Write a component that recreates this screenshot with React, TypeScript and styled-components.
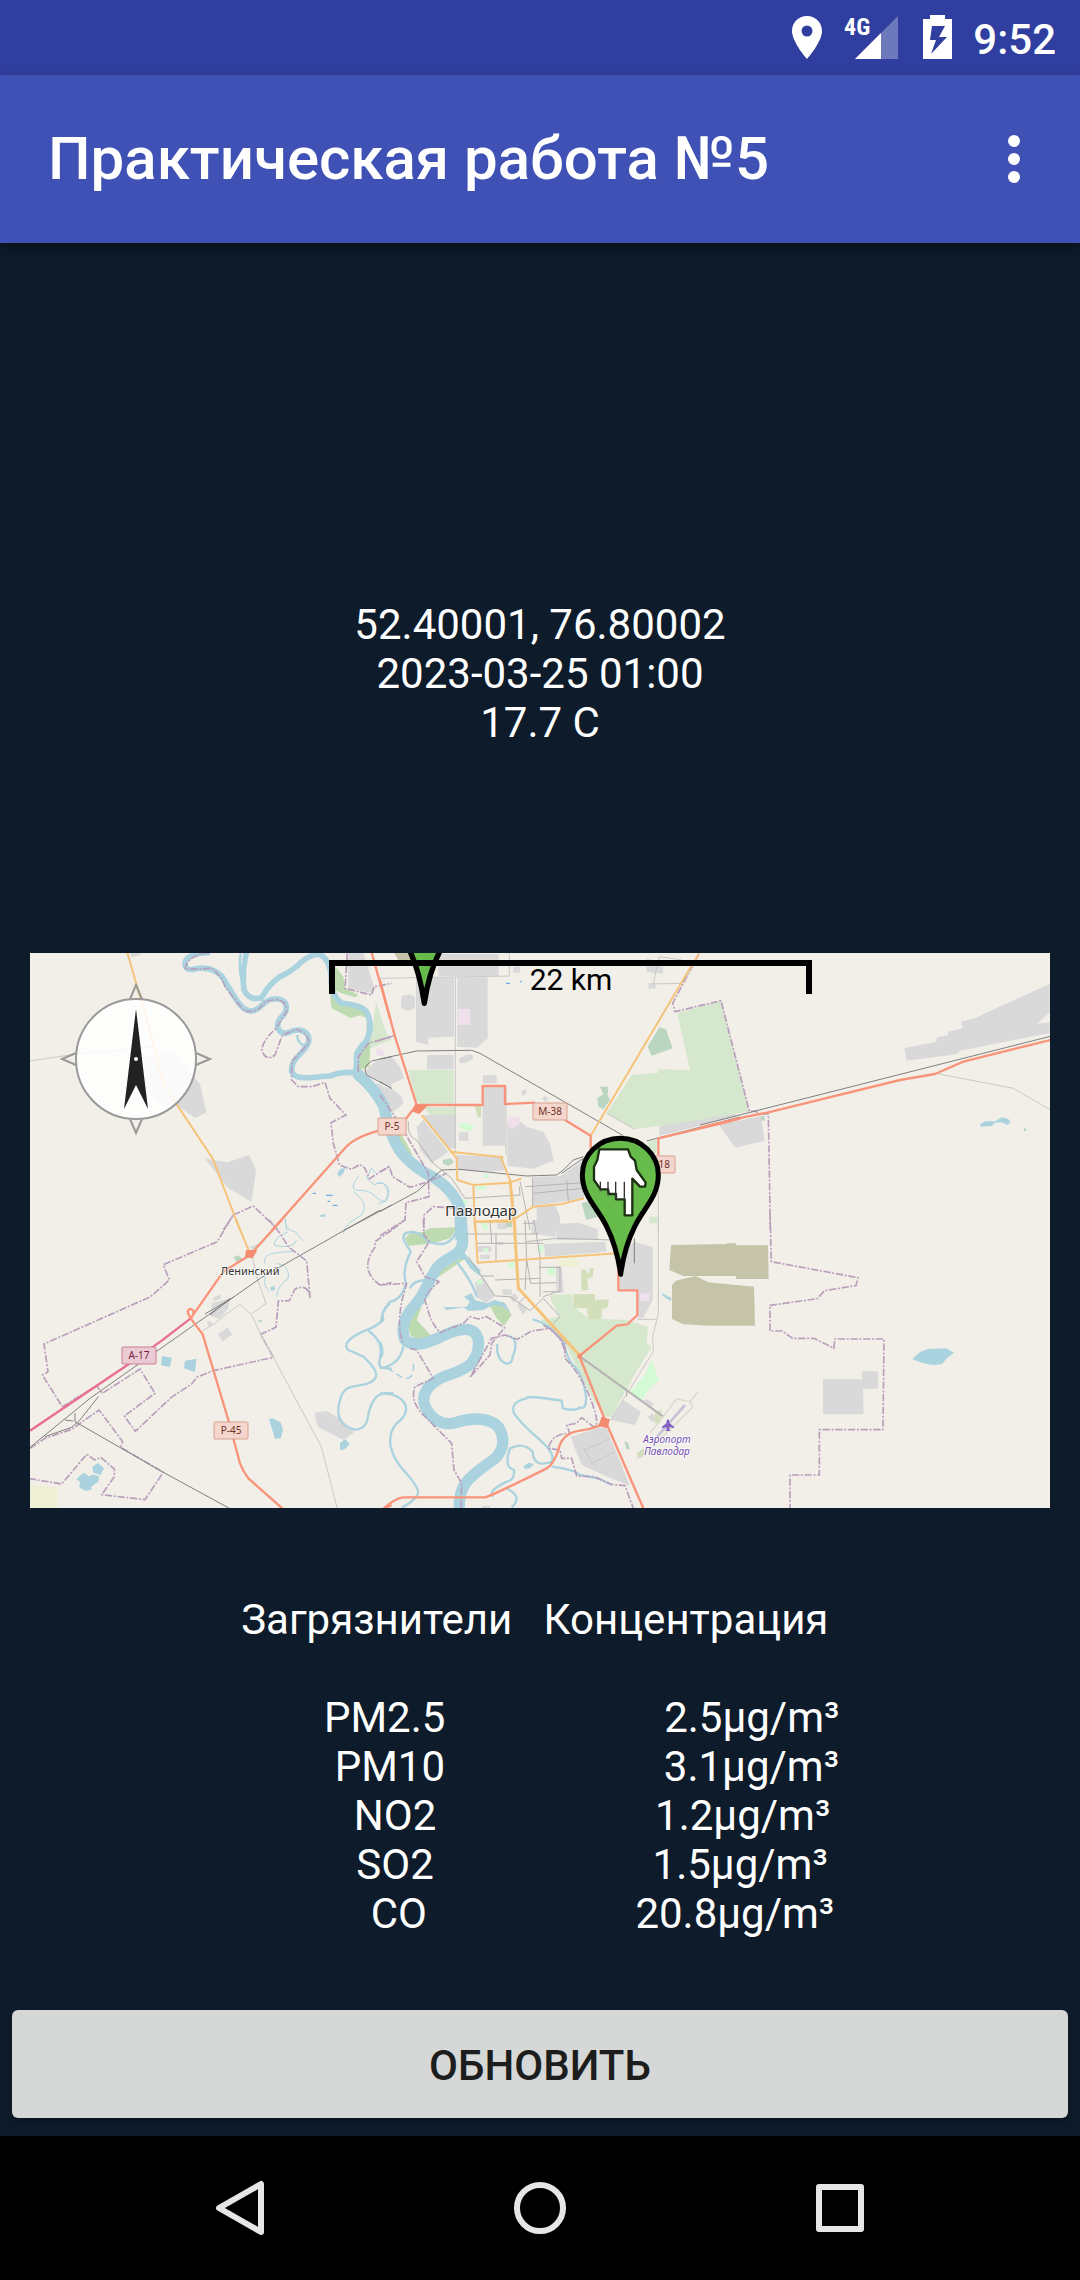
import React from "react";
import styled, { createGlobalStyle } from "styled-components";

const GlobalStyle = createGlobalStyle`
  * { box-sizing: border-box; }
  body { margin: 0; background: #0d1b2a; font-family: Roboto, "Noto Sans", sans-serif; }
  button { font: inherit; border: 0; padding: 0; background: none; cursor: pointer; }
`;

const Screen = styled.div`
  display: flex;
  flex-direction: column;
  min-height: 100vh;
  color: #fff;
  font-size: 42px;
  line-height: 49px;
`;

const StatusBar = styled.div`
  display: flex;
  align-items: flex-start;
  justify-content: flex-end;
  height: 75px;
  padding: 15px 24px 0 0;
  background: #303f9f;
`;

const StatusIcons = styled.svg`
  width: 162px;
  height: 45px;
  margin-right: 21px;
  font-family: "Roboto Condensed", "Liberation Sans Narrow", Roboto, sans-serif;
  font-size: 24px;
  font-weight: 700;
`;

const Clock = styled.time`
  font-weight: 500;
`;

const AppBar = styled.header`
  position: relative;
  display: flex;
  align-items: center;
  justify-content: space-between;
  height: 168px;
  padding: 0 30px 0 48px;
  background: #3f51b5;
  box-shadow: 0 4px 12px rgba(0, 0, 0, 0.4);
`;

const Title = styled.h1`
  margin: 0;
  font-size: 60px;
  line-height: 70px;
  font-weight: 500;
`;

const MenuButton = styled.button`
  display: grid;
  place-items: center;
  width: 72px;
  height: 96px;
`;

const Content = styled.main`
  flex: 1;
  display: flex;
  flex-direction: column;
`;

const Summary = styled.section`
  flex: 1;
  display: flex;
  flex-direction: column;
  justify-content: flex-end;
  padding-bottom: 206px;
  text-align: center;
`;

const Line = styled.p`
  margin: 0;
`;

const MapFrame = styled.section`
  margin: 0 30px;
`;

const MapCanvas = styled.svg`
  display: block;
  width: 100%;
  background: #f2efe9;
`;

const Report = styled.table`
  display: block;
  margin: 87px 0 72px;

  thead {
    display: block;
    padding-bottom: 49px;
  }
  tbody {
    display: block;
  }
`;

const ReportRow = styled.tr`
  display: flex;
  justify-content: center;
  white-space: pre;
`;

const HeadCell = styled.th`
  padding: 0;
  font-weight: 400;
`;

const Cell = styled.td`
  padding: 0;
`;

const RefreshButton = styled.button`
  height: 108px;
  margin: 0 12px 18px;
  padding-top: 2px;
  border-radius: 6px;
  background: #d6d7d7;
  color: #1d1d1d;
  font-weight: 500;
  text-transform: uppercase;
  box-shadow: 0 5px 6px rgba(0, 0, 0, 0.22);
`;

const NavBar = styled.nav`
  display: grid;
  grid-template-columns: repeat(3, 1fr);
  height: 144px;
  padding: 0 90px;
  background: #000;
`;

const NavButton = styled.button`
  display: grid;
  place-items: center;
`;

/* ---------- map data ---------- */

type Sheet = "A" | "B" | "C" | "D" | "E" | "F";
type Shape = [Sheet, string];

const ORIGIN: Record<Sheet, string> = {
  A: "0 0",
  B: "1050 0",
  C: "2010 0",
  D: "0 840",
  E: "1050 840",
  F: "2010 840",
};

interface Layer {
  fill?: string;
  stroke?: string;
  width?: number;
  dash?: string;
  shapes: Shape[];
}

const LAYERS: Layer[] = [
  {
    fill: "#d9d9d9",
    shapes: [
      ["A", "M300 38H335L330 46 305 52ZM345 350L430 335 470 385 510 432 529 518 495 534 440 495 385 488 345 440Z"],
      ["A", "M524 655L592 667 658 645 678 690 665 786 595 745Z"],
      ["A", "M955 39H1000L1035 150 1020 158 955 145Z"],
      ["A", "M1005 395L1035 365 1085 350V440L1020 410ZM1020 435L1050 430 1085 470V510L1050 490Z"],
      ["B", "M175 42H356V108H175ZM400 80H420V98H400ZM108 115L222 112V290L145 293V315L108 305ZM232 112H323V295L292 323 232 320ZM65 168L90 163 105 172V205L85 212 63 205Z"],
      ["B", "M141 345H221V388H141ZM237 355L260 344 280 345 278 358 255 370 238 368ZM0 365L40 355 65 390 72 415 40 430 0 420ZM0 440L35 445 65 470 70 490 40 515 0 490Z"],
      ["B", "M309 405H350V430H309ZM308 440H375V617H308ZM382 545L415 540 440 560 490 575 510 612 521 662 460 686 382 678ZM423 455L440 445 438 462 428 468ZM485 475L495 468 505 476 497 487Z"],
      ["B", "M125 525H228V625H205L170 580ZM110 560L130 540 205 635 155 670 120 630ZM228 645L365 650 380 690 330 695 232 690ZM237 577H265V602H237Z"],
      ["B", "M458 712L540 708 612 660V775L458 798ZM470 798L525 795 540 830V870H470ZM800 55L830 65 850 85 848 102 800 95ZM805 130L825 128 828 145 806 148Z"],
      ["B", "M838 558L960 533 1040 514 1065 530 838 588ZM1015 550L1060 545V615Z"],
      ["C", "M58 555L182 528 195 602 105 623ZM0 530L100 514 110 530 0 555Z"],
      ["C", "M613 324L710 305V292L745 285V275L788 264 783 245 825 234 1055 129V212L1010 252 1055 245V278L780 332 770 343 620 362Z"],
      ["D", "M550 233L570 223 573 236 552 243ZM545 250L600 235 595 265 570 295 543 290ZM562 343L594 322 606 344 578 364ZM530 308L540 303 548 314 538 320Z"],
      ["D", "M853 578L890 573 935 600 973 636 940 660 863 620Z"],
      ["D", "M658 80L685 72 675 95Z"],
      ["E", "M455 0H510L528 18V50L455 42ZM530 12L595 8 653 28V60H530ZM492 72L675 65 680 95 495 110ZM528 138H545L552 218H530Z"],
      ["E", "M286 185L310 170 344 228 318 250 290 232ZM367 208H395V225H368ZM390 230L405 220 415 235 400 248ZM410 255L425 248 440 270 430 284ZM522 310L540 292 573 335 562 347Z"],
      ["E", "M712 100L765 65 818 82V240L790 293H772V210H715ZM730 540L783 575 765 615 690 600ZM573 650L660 622 680 625 750 798 670 765 605 735 583 680ZM305 858H330V870H310ZM790 542L800 538 823 552 815 560ZM803 590L818 580 830 600 815 607Z"],
      ["E", "M290 78H335V95H290ZM300 105H330V118H302ZM352 10H380V28H352ZM350 65H370V75H350Z"],
      ["F", "M369 478H486V454H534V506H489L491 583H369Z"],
    ],
  },
  {
    fill: "#d5e8cd",
    shapes: [
      ["A", "M1038 185L1072 290 1085 300 1020 325Z"],
      ["B", "M85 390H221V490L125 492 108 480ZM130 502H225V525H150ZM-5 220L20 285-5 290Z"],
      ["B", "M892 220L1023 182 1107 515 1060 522 905 548 765 568 680 520 755 405 835 398V388L930 390ZM806 605L830 600V640H806ZM808 830H832V850H808Z"],
      ["E", "M510 225L575 222 580 260 625 295 740 300 803 320 800 370 815 380 760 470 695 590H672L640 540 555 370 480 300 540 290 515 245Z"],
      ["D", "M610 115L635 112 625 128Z"],
    ],
  },
  {
    fill: "#bddab1",
    shapes: [
      ["A", "M915 78L940 110 945 145 985 165 975 172 935 160 905 145ZM900 165L940 192 1000 205 1020 240 1022 300 1018 380 985 390 985 340 1008 300 1010 235 990 226 962 234 905 205Z"],
      ["B", "M25 590L60 575 98 645 75 655 48 635Z"],
      ["E", "M75 55L90 40 130 35 150 25 235 22 210 55 160 70 85 78ZM180 155L250 95 262 110 235 130 170 175ZM80 290L125 260 110 300 158 352 115 362 90 345ZM325 250L370 245 395 285 372 318 350 295ZM150 580L175 585 190 600 165 600Z"],
    ],
  },
  {
    fill: "#bad6c0",
    shapes: [
      ["B", "M803 320L838 262 858 268 878 325 815 347ZM652 475L670 462 660 440 685 440 683 465 690 480 670 508 655 500ZM188 660L212 655 222 667 205 678 190 672ZM605 790L640 780 655 830 618 840ZM380 845H395V862H380Z"],
      ["C", "M183 528H194V542H183ZM972 563L980 568 978 574 972 573Z"],
      ["D", "M610 112L625 106 637 117 622 129ZM683 300L697 300 692 308Z"],
      ["E", "M378 0H396V20H378ZM733 665H742L750 688H740Z"],
    ],
  },
  {
    fill: "#d3debb",
    shapes: [
      ["E", "M580 222H645V240L687 238 683 262 665 268V297H625L620 265H580ZM603 148L618 150 625 165 630 145 642 145 638 170 622 178 625 210 605 212Z"],
      ["B", "M285 498H303V532H293Z"],
      ["E", "M825 575L845 570 840 610 823 608ZM770 700L790 685 800 705 775 715Z"],
    ],
  },
  {
    fill: "#d2fad4",
    shapes: [
      ["E", "M815 418L836 480 800 515 785 545 750 515 795 465ZM503 143H525V165H503ZM475 75H490V98H475ZM385 127H403V142H385ZM305 2H318V22H305ZM310 85H325V97H310ZM290 183L305 178 310 190 292 195Z"],
      ["B", "M238 550Q262 545 285 560Q280 572 260 573Q238 568 238 550ZM248 775L262 780 258 795 248 790ZM285 738H320V748H285ZM310 850H322V870H310ZM310 705L325 702V713L312 716Z"],
    ],
  },
  {
    fill: "#efe0ec",
    shapes: [
      ["B", "M234 207H270V255H234ZM382 530H420V550L395 567 382 550ZM0 325L15 335 10 350-12 345-12 330Z"],
      ["E", "M780 220H808V243H780Z"],
    ],
  },
  {
    fill: "#eef0d5",
    shapes: [
      ["D", "M0 792L83 805V866H0Z"],
      ["E", "M530 120L590 112 595 140 540 140Z"],
    ],
  },
  {
    fill: "#c5c3a8",
    shapes: [
      ["B", "M43 39H90L100 60H55Z"],
      ["E", "M873 75L1040 72V70H1068V76H1164L1166 177H1068V168H910L868 150ZM888 182L947 168 985 187 1122 200 1125 317H990L910 313 876 297V195Z"],
    ],
  },
  {
    fill: "#aad3df",
    shapes: [
      ["A", "M922 700L930 688 946 683 940 700 926 712ZM868 826L888 822 885 830 870 830Z"],
      ["C", "M840 553L855 544 885 544 905 532 925 537 932 548 922 555 905 547 885 548 875 558 842 560Z"],
      ["D", "M397 408L425 413 420 441 393 436ZM465 422L499 416 495 456 462 445ZM717 598L728 595 752 607 759 630 752 655 735 657ZM930 670L945 657 959 672 945 688 930 690ZM720 203L732 197 736 208 725 214ZM187 740L205 729 222 745 212 765 190 758ZM139 778L160 758 180 770 185 763 207 768 205 785 183 800 185 810 165 812 148 802 150 785Z"],
      ["E", "M252 230L275 220 285 240 320 250 345 240 375 250 390 275 365 258 340 255 310 270 265 273 250 262 200 270 190 262 260 260 270 245ZM430 740L445 728 462 732 450 745 435 746ZM846 220L875 235 872 243 848 228ZM225 115L250 95 270 120 302 150 300 168 270 145 255 120Z"],
      ["F", "M637 418L660 396 685 387 738 385 762 398 741 415 725 433 700 435 670 430Z"],
    ],
  },
  {
    stroke: "#aad3df",
    width: 17,
    shapes: [
      ["A", "M540 37Q465 42 465 70Q465 92 490 88Q540 75 575 108C610 160 630 215 665 213C695 210 700 178 730 177C775 172 780 210 750 235C735 260 745 285 775 278C810 260 840 275 836 305C825 340 780 355 785 395C800 425 850 410 900 408Q945 390 985 402"],
      ["A", "M650 37Q635 90 642 150Q660 185 695 172Q720 130 750 110Q790 92 815 65Q850 38 872 45Q900 60 904 110Q900 165 935 190Q1000 195 1012 220Q1030 260 1010 300Q975 340 978 395"],
    ],
  },
  {
    stroke: "#aad3df",
    width: 34,
    shapes: [
      ["A", "M978 398Q1035 445 1062 500Q1080 590 1115 640Q1160 690 1210 712Q1270 750 1290 805L1293 900"],
      ["E", "M243-20L248 60C250 110 195 110 170 145C140 190 140 215 105 255C60 300 65 350 80 365C120 385 160 360 210 338C260 320 290 325 296 365C295 430 260 445 220 460C170 475 125 500 132 550C150 600 190 620 230 607C280 590 330 595 355 620C380 660 370 705 325 730C260 775 235 800 238 870"],
    ],
  },
  {
    stroke: "#aad3df",
    width: 7,
    shapes: [
      ["A", "M632 40Q625 80 635 125M665 175L700 180M802 285Q800 310 830 320M985 385Q955 340 1008 300"],
      ["D", "M1080 250Q1050 275 1060 300Q1030 325 1005 332Q930 365 955 390Q990 405 1000 410C1055 460 1045 480 1010 492C960 500 940 500 930 540C910 605 950 625 980 629C1030 620 1000 570 1040 530Q1060 515 1090 520M1015 332C1085 380 1030 430 1055 443L1085 447"],
      ["E", "M235 20C215 85 175 75 145 65C125 45 110 30 80 38C55 50 85 80 92 95Q65 150 78 190Q65 240 30 245Q0 280 5 305M90 205Q100 180 145 180M0 365Q15 400 0 415M70 380Q60 435 0 445M0 520C75 520 105 570 50 610C15 650 30 705 70 750Q125 810 112 825Q95 850 65 862M230 125Q280 190 290 230"],
      ["E", "M352 372C345 430 395 450 398 410C415 370 405 350 380 347M458 298Q510 310 550 365Q560 410 575 430Q610 460 618 530Q620 570 600 562Q585 575 548 565L545 542Q440 525 440 535Q390 545 402 580C450 650 530 680 516 725Q460 745 458 695Q430 665 390 685Q370 740 402 750Q405 780 380 785C330 810 330 820 340 830M515 740L550 745 585 755 600 765 655 775 695 795M380 805Q430 830 395 862"],
    ],
  },
  {
    stroke: "#aad3df",
    width: 3,
    shapes: [
      ["A", "M985 710Q960 740 975 750Q1010 750 1025 760Q1070 805 1075 765Q1065 710 1035 735L1010 715 1025 685 1038 700M970 755Q1020 790 995 825Q945 850 940 880M765 835L770 870"],
      ["D", "M765 0Q765 30 795 35L818 62M775 35Q735 50 732 75Q790 90 800 60M790 95Q690 95 705 130M740 130Q780 135 775 175Q740 200 740 230M705 170Q700 200 718 215"],
      ["B", "M-12 730Q45 725 15 785L-5 790"],
    ],
  },
  {
    stroke: "#aad3df",
    width: 5,
    dash: "22 12",
    shapes: [["E", "M20 442L70 475Q105 480 100 430"]],
  },
  {
    stroke: "#b99fbc",
    width: 5,
    dash: "22 5 6 5",
    shapes: [
      ["A", "M540 37Q470 45 465 88L545 85Q575 108 585 140L640 210Q680 225 705 185Q770 165 770 215L738 265Q690 310 697 335Q710 365 735 345L757 285L800 268Q840 285 836 310L785 365V420L805 440H845L885 427L900 475L948 525L903 548L910 610L928 675L965 688L990 673L1005 685L1018 716L1080 678M610 825L670 798L740 865M610 825L580 870M952 40L945 145L1025 165L1032 140L1085 130M985 395V350L1015 310L1085 290"],
      ["B", "M0 300L45 285M0 465L55 545L145 700L147 770L78 788L75 840L35 870M0 695L28 680L38 710L90 742L145 725L200 700M230 805L160 800L132 825V870M957 41L878 190L885 215L1023 182L1108 514H1130L1132 522H1165L1171 870"],
      ["D", "M600 0L562 65L400 134L418 180L362 230L42 372L54 455L37 465L97 560M97 560L200 497L217 520L330 447L375 520L283 588L316 634L424 532L485 492L500 472L550 452L730 412L692 343L738 322L745 243L778 242L795 207Q835 190 840 232L830 123L775 80L750 40L718 0M1085 30L1035 65V82Q985 150 1050 195L1085 188M0 685L45 655L125 628L207 570L278 665L272 682L400 757L345 839L215 824L253 770V747L212 712L195 720L170 703L95 792L0 776"],
      ["E", "M130 0L132 45L148 65L110 125L135 170L178 185Q120 230 140 255Q150 305 180 338L250 310L270 290L295 297L320 290L374 323L335 370L330 405L270 472L335 355L375 345L412 358L455 333L510 325L555 370V415Q610 470 640 560Q660 620 640 620L605 593L590 610L560 615L570 640Q515 640 505 685L540 690L545 715L575 715L590 768L640 770L695 793L735 797L760 865M90 385L110 390L160 475L105 500Q90 540 125 580L215 670L222 750L245 790L243 865M0 195L80 190L65 245Q50 330 70 370M0 47L75 0M490 315Q550 350 555 400"],
      ["F", "M210-20L214 125L474 173L468 197L373 212L352 236L210 256V333H246L278 355H342L402 385L404 357H552L549 629H358V765H270V866"],
    ],
  },
  {
    stroke: "#c9c8c6",
    width: 3,
    shapes: [
      ["A", "M0 363L120 345 370 320M345 415L400 423"],
      ["C", "M705 400L785 415 940 445 1055 512"],
      ["D", "M665 100L680 170 708 250 665 282M518 332Q560 310 585 285L630 253L665 285L692 343L730 412L874 680L922 866"],
      ["B", "M0 115L388 108V40M226 112V640M378 440V645M680 520L765 568M820 130L838 50 905 60M820 132L905 130 940 80M835 640V870"],
      ["E", "M835 0V280L818 350 820 395 745 515 695 595M772 298H830M612 692L690 655M612 685L635 730 705 695"],
    ],
  },
  {
    stroke: "#b5b4b3",
    width: 3,
    shapes: [
      ["B", "M110 600L160 670 215 715 255 775 420 765 418 740M420 725L435 795 450 870M435 740L610 728M458 712V798M460 760L610 745M560 720L565 785M85 545Q80 590 110 600M288 845H390M430 850H460"],
      ["E", "M258 42H475M290 70H490M330 0L335 70M348 40V122M435 0L440 120 435 210M462 0L480 110V230M478 142H540V215H490M440 65L530 55 700 60M345 180L480 175M300 168H342M440 120L452 190 530 188M265 110L345 228 390 230 450 272 490 235 540 290 520 310M415 250L440 225M490 230L530 215M740 505V530"],
    ],
  },
  {
    stroke: "#b5b4b3",
    width: 6,
    shapes: [["E", "M600 410L850 590"]],
  },
  {
    stroke: "#808080",
    width: 3,
    shapes: [
      ["B", "M0 357L110 333 275 331 300 340 730 587M0 425L35 445M0 815L110 755 185 690 240 688 440 708 530 705 550 690 580 660 610 650M545 700L610 655M800 603L1080 531"],
      ["A", "M1085 350L1025 363Q995 380 1010 405L1085 445M940 872L1085 795"],
      ["C", "M0 555L1055 288"],
      ["D", "M1050-30L695 172 180 535 0 682M135 580V605L400 757 600 866M130 603L105 600M205 530L150 600 125 622 45 650M525 282L610 232M540 285L600 235"],
      ["E", "M763 55V130"],
    ],
  },
  {
    stroke: "#f5c37a",
    width: 6,
    shapes: [
      ["A", "M292 38L330 170 360 270 400 430 438 490 548 655 630 870"],
      ["B", "M957 41L930 85 632 587M125 525L230 655 232 720 280 735 390 728 425 715M210 635L370 652M362 650L390 720M280 735L285 870M285 845L400 840 460 800 545 792 612 775"],
      ["D", "M618 0L660 100"],
      ["E", "M285 0L293 128 712 100M285 5H395"],
    ],
  },
  {
    stroke: "#f5c37a",
    width: 9,
    shapes: [
      ["B", "M390 720L405 870"],
      ["E", "M402 0L415 205 598 405"],
    ],
  },
  {
    stroke: "#e96e91",
    width: 7,
    shapes: [["D", "M0 632L300 430 400 358 482 295"]],
  },
  {
    stroke: "#f9947a",
    width: 7,
    shapes: [
      ["A", "M1025 38L1080 235M1090 560L1060 568Q970 590 940 630L725 872"],
      ["B", "M0 120L45 290 110 495 75 540M110 495H308V438H375V492L465 488M555 540L632 587V650M835 645V595L1025 550 1080 536"],
      ["C", "M0 563L140 530 205 517 600 420 705 402 790 365 1055 299"],
      ["D", "M755 0L660 105 580 155 482 295L518 343 595 600 630 730Q640 755 655 775L760 868M482 295Q465 270 482 267Q500 272 482 295M1058 870L1085 855"],
      ["E", "M715 150V211H772V285L742 313 710 317 598 408 675 600 790 865M10 866Q45 835 70 832H315Q330 830 500 745Q520 735 535 690Q545 640 600 632Q650 625 680 605"],
    ],
  },
  {
    fill: "#f38b70",
    shapes: [
      ["B", "M105 492L145 495 118 522 98 515Z"],
      ["D", "M648 90L682 90 668 115 645 112Z"],
      ["E", "M665 590L690 598 682 625 655 618ZM592 403H605V415H592Z"],
    ],
  },
  {
    stroke: "#c4c3d8",
    width: 8,
    shapes: [["E", "M915 555L830 652"]],
  },
  {
    stroke: "#dcd9c9",
    width: 4,
    shapes: [["E", "M955 514L930 545 938 562 785 710 768 715M930 545L890 537 810 640"]],
  },
  {
    stroke: "#4c9fe8",
    width: 3,
    shapes: [
      ["A", "M848 760H858M888 766H908M893 784H900M908 796H923"],
      ["B", "M378 130H390M420 125H426"],
    ],
  },
];

const SHIELDS = [
  { x: 348, y: 165, w: 28, label: "P-5", trunk: false },
  { x: 503, y: 150, w: 34, label: "M-38", trunk: false },
  { x: 611, y: 203, w: 34, label: "M-18", trunk: false },
  { x: 92, y: 394, w: 34, label: "A-17", trunk: true },
  { x: 184, y: 469, w: 34, label: "P-45", trunk: false },
];

const MapText = styled.text<{ $size: number; $color?: string; $italic?: boolean }>`
  font-family: "Noto Sans", sans-serif;
  font-size: ${(p) => p.$size}px;
  font-style: ${(p) => (p.$italic ? "italic" : "normal")};
  fill: ${(p) => p.$color ?? "#333"};
  text-anchor: middle;
  paint-order: stroke;
  stroke: rgba(255, 255, 255, 0.7);
  stroke-width: 2px;
  stroke-linejoin: round;
`;

const ShieldText = styled.text<{ $trunk: boolean }>`
  font-family: "Noto Sans", sans-serif;
  font-size: 10px;
  fill: ${(p) => (p.$trunk ? "#73233f" : "#70302a")};
  text-anchor: middle;
`;

const ScaleText = styled.text`
  font-size: 30px;
  fill: #000;
  text-anchor: middle;
`;

const CityMap = () => (
  <MapCanvas viewBox="0 0 1020 555" role="img" aria-label="Павлодар">
    <g transform="translate(0 -13) scale(0.333333)">
      {LAYERS.map((layer, i) => (
        <g
          key={i}
          fill={layer.fill ?? "none"}
          stroke={layer.stroke}
          strokeWidth={layer.width}
          strokeDasharray={layer.dash}
          strokeLinejoin="round"
        >
          {layer.shapes.map(([sheet, d], j) => (
            <path key={j} d={d} transform={`translate(${ORIGIN[sheet]})`} />
          ))}
        </g>
      ))}
      <g transform="translate(1050 840)">
        <path
          d="M864 597Q869 600 869 610L882 620V625L869 621 868 629 873 633H855L860 629 859 621 846 625V620L859 610Q859 600 864 597Z"
          fill="#8461c4"
        />
      </g>
    </g>

    {SHIELDS.map((s) => (
      <g key={s.label}>
        <rect
          x={s.x}
          y={s.y}
          width={s.w}
          height="17"
          rx="1"
          fill={s.trunk ? "#ebcad3" : "#f4d6cd"}
          stroke={s.trunk ? "#cc7f96" : "#d9a08f"}
        />
        <ShieldText x={s.x + s.w / 2} y={s.y + 12} $trunk={s.trunk}>
          {s.label}
        </ShieldText>
      </g>
    ))}
    <MapText x="451" y="263" $size={15}>Павлодар</MapText>
    <MapText x="220" y="322" $size={11}>Ленинский</MapText>
    <MapText x="637" y="490" $size={10} $color="#7450b5" $italic>Аэропорт</MapText>
    <MapText x="637" y="502" $size={10} $color="#7450b5" $italic>Павлодар</MapText>

    <g transform="translate(350 -13) scale(0.333333)" strokeLinejoin="round">
      <path d="M88 30Q118 90 133 190Q148 90 182 30Z" fill="#66bb4a" stroke="#000" strokeWidth="16" />
      <path
        d="M722 1003C714 945 700 900 680 860C655 805 607 770 607 705A114 110 0 0 1 835 705C835 770 790 805 764 860C744 900 730 945 722 1003Z"
        fill="#66bb4a"
        stroke="#000"
        strokeWidth="15"
      />
      <path
        d="M658 628H744L752 650 765 662 770 690 797 728 795 740H780L757 716V826H734V778H708V762H687L684 748H662L642 720V680L652 660Z"
        fill="#fff"
        stroke="#1c3014"
        strokeWidth="7"
      />
      <path d="M661 725V754M684 725V766M707 725V778M733 725V780" stroke="#333" strokeWidth="4" fill="none" />
    </g>

    <path d="M302 41V10H779V41" fill="none" stroke="#000" strokeWidth="6" />
    <ScaleText x="541" y="37">22 km</ScaleText>

    <g transform="translate(106 106)" stroke="#999" strokeWidth="2" fill="none">
      <path d="M-6-60L0-74 6-60M-6 60L0 74 6 60M-60-6L-74 0-60 6M60-6L74 0 60 6" />
      <circle r="60" fill="#fff" fillOpacity="0.85" />
      <path d="M0-50L12 50 0 26-12 50Z" fill="#222" stroke="none" />
      <circle r="2" fill="#fff" stroke="none" />
    </g>
  </MapCanvas>
);

/* `lead` and `gap` are counted in spaces, as in the preformatted report text. */
const POLLUTANTS = [
  { name: "PM2.5", value: "2.5µg/m³", lead: 8, gap: 21 },
  { name: "PM10", value: "3.1µg/m³", lead: 9, gap: 21 },
  { name: "NO2", value: "1.2µg/m³", lead: 10, gap: 21 },
  { name: "SO2", value: "1.5µg/m³", lead: 10, gap: 21 },
  { name: "CO", value: "20.8µg/m³", lead: 12, gap: 20 },
];

export default function App() {
  return (
    <>
      <GlobalStyle />
      <Screen>
        <StatusBar>
          <StatusIcons viewBox="0 0 162 45" fill="#fff" aria-hidden="true">
            <path
              fillRule="evenodd"
              d="M17 1C8 1 2 8 2 16C2 27 17 44 17 44S32 27 32 16C32 8 26 1 17 1ZM17 10.500A5.500 5.500 0 1 1 17 21.500A5.500 5.500 0 1 1 17 10.500Z"
            />
            <path d="M108 1V44H65Z" opacity="0.3" />
            <path d="M91 18V44H65Z" />
            <text x="54" y="20">4G</text>
            <path
              fillRule="evenodd"
              d="M140 0H155V4H162V44H133V4H140ZM142 11L140 25H146L141 39 157 22H149L155 11Z"
            />
          </StatusIcons>
          <Clock>9:52</Clock>
        </StatusBar>
        <AppBar>
          <Title>Практическая работа №5</Title>
          <MenuButton aria-label="Меню">
            <svg width="12" height="48" viewBox="0 0 12 48" fill="#fff">
              <circle cx="6" cy="6" r="6" />
              <circle cx="6" cy="24" r="6" />
              <circle cx="6" cy="42" r="6" />
            </svg>
          </MenuButton>
        </AppBar>
        <Content>
          <Summary>
            <Line>52.40001, 76.80002</Line>
            <Line>2023-03-25 01:00</Line>
            <Line>17.7 C</Line>
          </Summary>
          <MapFrame>
            <CityMap />
          </MapFrame>
          <Report>
            <thead>
              <ReportRow>
                <HeadCell scope="col">{"Загрязнители   "}</HeadCell>
                <HeadCell scope="col">{"Концентрация "}</HeadCell>
              </ReportRow>
            </thead>
            <tbody>
              {POLLUTANTS.map((p) => (
                <ReportRow key={p.name}>
                  <Cell>{" ".repeat(p.lead) + p.name + " ".repeat(p.gap)}</Cell>
                  <Cell>{p.value}</Cell>
                </ReportRow>
              ))}
            </tbody>
          </Report>
          <RefreshButton>Обновить</RefreshButton>
        </Content>
        <NavBar>
          <NavButton aria-label="Назад">
            <svg width="50" height="56" viewBox="0 0 50 56" fill="none" stroke="#e6e6e6" strokeWidth="6" strokeLinejoin="round">
              <path d="M46 4V52L4 28Z" />
            </svg>
          </NavButton>
          <NavButton aria-label="Домой">
            <svg width="52" height="52" viewBox="0 0 52 52" fill="none" stroke="#e6e6e6" strokeWidth="6">
              <circle cx="26" cy="26" r="23" />
            </svg>
          </NavButton>
          <NavButton aria-label="Недавние">
            <svg width="48" height="48" viewBox="0 0 48 48" fill="none" stroke="#e6e6e6" strokeWidth="6" strokeLinejoin="round">
              <rect x="3" y="3" width="42" height="42" />
            </svg>
          </NavButton>
        </NavBar>
      </Screen>
    </>
  );
}
